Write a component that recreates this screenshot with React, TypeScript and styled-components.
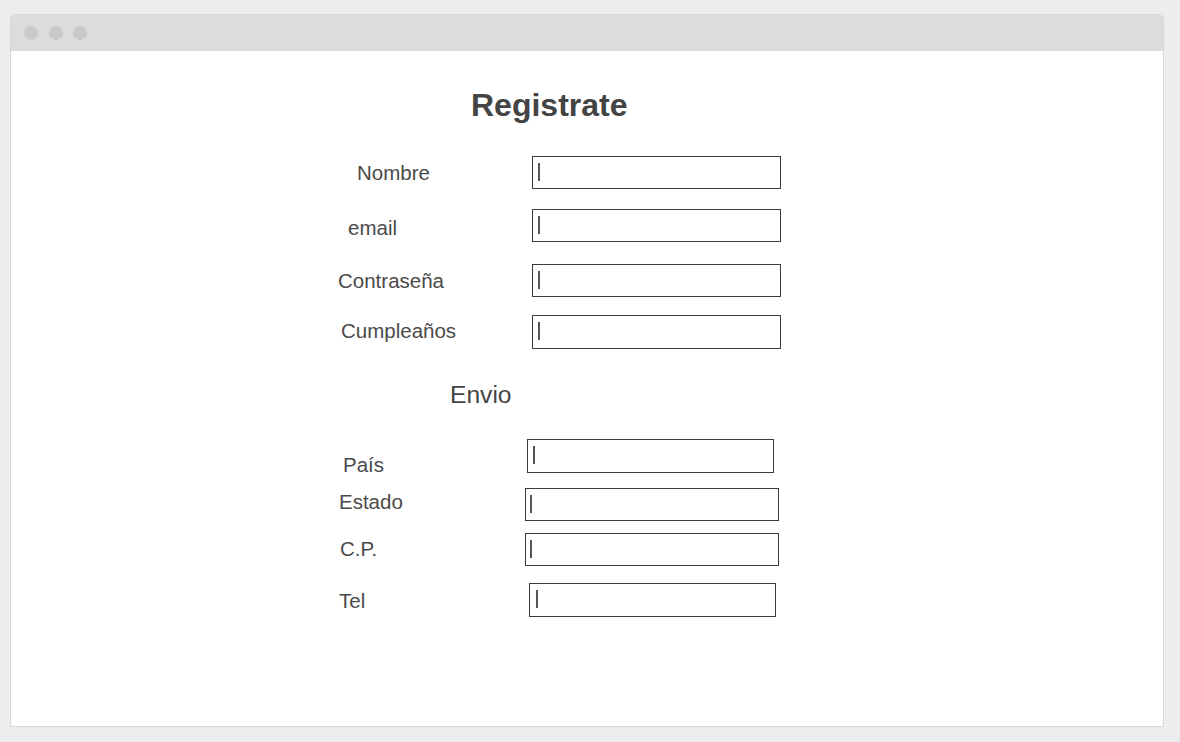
import styled, { createGlobalStyle } from 'styled-components'

const GlobalStyle = createGlobalStyle`
  html, body {
    margin: 0;
    padding: 0;
    background: #ededed;
  }

  body {
    font-family: "Liberation Sans", Arial, sans-serif;
    color: #444444;
  }
`

const PageStyled = styled.div`
  padding: 14px 16px 15px 10px;
`

const WindowStyled = styled.div`
  display: flex;
  flex-direction: column;

  height: 713px;
  box-sizing: border-box;
  border: 1px solid #d6d6d6;
  border-radius: 5px 5px 0 0;
  background-color: #ffffff;
  overflow: hidden;
`

const TitleBarStyled = styled.div`
  display: flex;
  align-items: center;
  gap: 10.5px;

  flex-shrink: 0;
  height: 36px;
  padding-left: 13px;
  background-color: #dcdcdc;
`

const DotStyled = styled.span`
  width: 14px;
  height: 14px;
  border-radius: 50%;
  background-color: #cacaca;
`

const CanvasStyled = styled.div`
  display: flex;
  flex-direction: column;
  align-items: flex-start;

  padding: 36px 0 0 326px;
`

const TitleStyled = styled.h1<{ indent: number }>`
  margin: 0 0 32px ${(props) => props.indent}px;

  font-size: 32px;
  line-height: 37px;
  font-weight: bold;
  color: #444444;
`

const SectionStyled = styled.h2<{ indent: number; top: number }>`
  margin: ${(props) => props.top}px 0 0 ${(props) => props.indent}px;

  font-size: 24.6px;
  line-height: 28px;
  font-weight: normal;
  color: #444444;
`

const RowStyled = styled.div<{ top: number }>`
  display: flex;
  align-items: flex-start;

  margin-top: ${(props) => props.top}px;
`

const LabelStyled = styled.label<{ indent: number; drop: number; column: number }>`
  flex-shrink: 0;
  box-sizing: border-box;
  width: ${(props) => props.column}px;
  padding: ${(props) => props.drop}px 0 0 ${(props) => props.indent}px;

  font-size: 20.5px;
  line-height: 23px;
  color: #4a4a4a;
`

const FieldStyled = styled.div<{ width: number; height: number; caret: number }>`
  display: flex;
  align-items: flex-start;

  box-sizing: border-box;
  width: ${(props) => props.width}px;
  height: ${(props) => props.height}px;
  padding: 6px 0 0 ${(props) => props.caret}px;

  border: 1px solid #3c3c3c;
  background-color: #ffffff;
`

const CaretStyled = styled.span`
  width: 1.5px;
  height: 18px;
  background-color: #555555;
`

type FieldRowProps = {
  label: string
  top: number
  indent: number
  drop: number
  column: number
  width: number
  height: number
  caret?: number
}

const FieldRow = ({ label, top, indent, drop, column, width, height, caret = 5 }: FieldRowProps) => {
  return (
    <RowStyled top={top}>
      <LabelStyled indent={indent} drop={drop} column={column}>
        {label}
      </LabelStyled>
      <FieldStyled width={width} height={height} caret={caret}>
        <CaretStyled />
      </FieldStyled>
    </RowStyled>
  )
}

const account = [
  { label: 'Nombre', top: 0, indent: 20, drop: 5, column: 195, width: 249, height: 33 },
  { label: 'email', top: 20, indent: 11, drop: 7, column: 195, width: 249, height: 33 },
  { label: 'Contraseña', top: 22, indent: 1, drop: 5, column: 195, width: 249, height: 33 },
  { label: 'Cumpleaños', top: 18, indent: 4, drop: 4, column: 195, width: 249, height: 34 },
]

const shipping = [
  { label: 'País', top: 30, indent: 6, drop: 14, column: 190, width: 247, height: 34 },
  { label: 'Estado', top: 12, indent: 2, drop: 2, column: 188, width: 254, height: 33, caret: 4 },
  { label: 'C.P.', top: 12, indent: 3, drop: 4, column: 188, width: 254, height: 33, caret: 4 },
  { label: 'Tel', top: 17, indent: 2, drop: 6, column: 192, width: 247, height: 34, caret: 6 },
]

export default function App() {
  return (
    <>
      <GlobalStyle />
      <PageStyled>
        <WindowStyled>
          <TitleBarStyled>
            <DotStyled />
            <DotStyled />
            <DotStyled />
          </TitleBarStyled>

          <CanvasStyled>
            <TitleStyled indent={134}>Registrate</TitleStyled>

            {account.map((row) => (
              <FieldRow key={row.label} {...row} />
            ))}

            <SectionStyled indent={113} top={32}>
              Envio
            </SectionStyled>

            {shipping.map((row) => (
              <FieldRow key={row.label} {...row} />
            ))}
          </CanvasStyled>
        </WindowStyled>
      </PageStyled>
    </>
  )
}
